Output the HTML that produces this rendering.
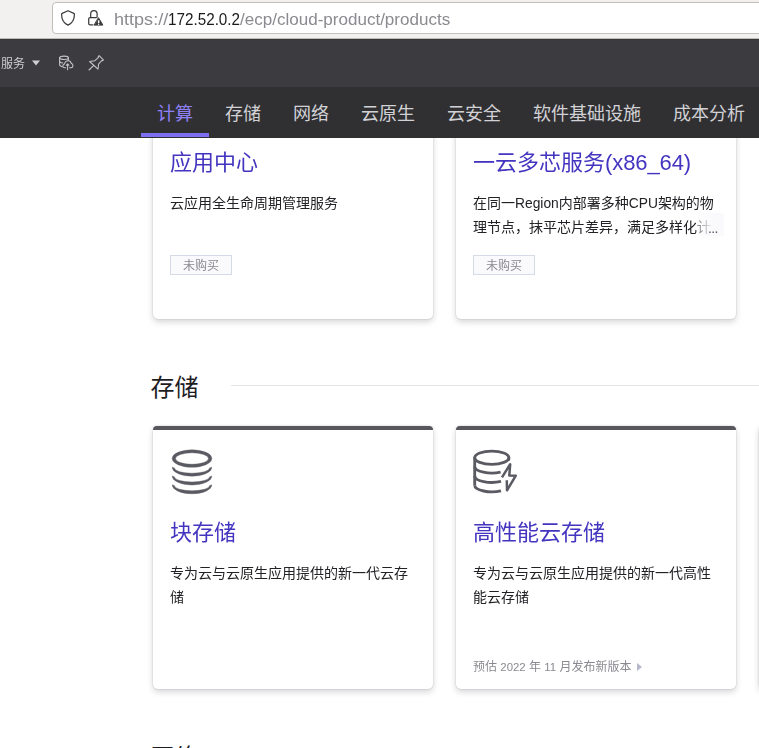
<!DOCTYPE html>
<html lang="zh-CN">
<head>
<meta charset="utf-8">
<title>云产品</title>
<style>
*{box-sizing:border-box;margin:0;padding:0}
html,body{width:759px;height:748px;overflow:hidden;background:#fff}
body{position:relative;font-family:"Liberation Sans","Noto Sans CJK SC",sans-serif;color:#1d1d1f;-webkit-font-smoothing:antialiased}
.abs{position:absolute}
/* browser chrome */
#chrome{z-index:5;left:0;top:0;width:759px;height:39px;background:#f2f1f0;border-bottom:1px solid #bfbcb8}
#urlbox{z-index:6;left:52px;top:2px;width:720px;height:32px;background:#fff;border:1px solid #c2beba;border-radius:4px}
#url{z-index:7;left:114px;top:7px;font-size:17.2px;line-height:24px;color:#8a8a90;white-space:nowrap;letter-spacing:0;width:400px;height:24px}
#url span{position:absolute;top:0;left:0;transform-origin:0 50%;display:block}
#url b{font-weight:400;color:#1b1b1f}
/* app header */
#hdr{z-index:5;left:0;top:39px;width:759px;height:49px;background:#3c3c40;border-top:1px solid #36363a}
#svc{will-change:transform;z-index:6;left:1px;top:54px;font-size:12px;line-height:20px;color:#cdcdd2;white-space:nowrap}
#nav{z-index:5;left:0;top:87px;width:759px;height:51px;background:#303033}
.tab{position:absolute;z-index:6;top:87px;height:51px;padding:0 16px;font-size:18px;line-height:54px;color:#d2d2d6;white-space:nowrap}
.tab.on{color:#8f80f5}
.tab.on:after{content:"";position:absolute;left:0;right:0;bottom:1px;height:4px;background:#7e6ef0}
/* cards */
.card{will-change:transform;position:absolute;width:280px;background:#fff;border-radius:5px;box-shadow:0 3px 6px rgba(30,30,45,.18),0 0 2px rgba(30,30,45,.2)}
.card.top4{border-top:4px solid #57575d;border-radius:4px 4px 5px 5px}
.ttl{position:absolute;left:17px;font-size:22px;line-height:30px;color:#4335c0;white-space:nowrap}
.desc{position:absolute;left:17px;width:244px;font-size:14px;line-height:24px;color:#222226}
.tag{position:absolute;left:17px;width:62px;height:20px;border:1px solid #d6d9e6;background:#fafafd;font-size:12px;line-height:20px;text-align:center;color:#8a8a8e}
.foot{position:absolute;left:17px;font-size:12px;line-height:18px;color:#8a8a90;white-space:nowrap}
.h2{position:absolute;left:150.5px;font-size:24px;line-height:32px;color:#1d1d1f;white-space:nowrap}
.rule{position:absolute;left:231px;width:540px;height:1px;background:#e5e5e7}
.ls{font-size:13.8px;line-height:0}
.lt{letter-spacing:-.1px}
.more{position:absolute;left:242px;top:157px;width:26px;height:23px;background:linear-gradient(90deg,rgba(251,251,253,.45) 0,#fafafd 60%);font-size:14px;line-height:30px;color:#55555c;text-align:left;padding-left:10px;letter-spacing:-.6px}
.fd{font-size:11.4px;line-height:0}
.tri{position:absolute;left:164.3px;top:4.5px;width:0;height:0;border-left:5px solid #b6b9cc;border-top:4.5px solid transparent;border-bottom:4.5px solid transparent}
</style>
</head>
<body>
<!-- browser chrome -->
<div id="chrome" class="abs"></div>
<div id="urlbox" class="abs"></div>
<svg class="abs" style="z-index:7;left:59px;top:9px" width="18" height="18" viewBox="0 0 18 18" fill="none" stroke="#3b3b3d" stroke-width="1.25" stroke-linejoin="round"><path d="M9 1.75 L14.8 4.35 Q15.4 4.6 15.4 5.3 C15.5 10.8 13.2 14.2 9 16.1 C4.8 14.2 2.5 10.8 2.6 5.3 Q2.6 4.6 3.2 4.35 Z"/></svg>
<svg class="abs" style="z-index:7;left:86px;top:9px" width="18" height="18" viewBox="0 0 18 18" fill="none" stroke="#3b3b3d" stroke-width="1.25" stroke-linejoin="round" stroke-linecap="round"><path d="M4.7 8.6 V4.8 A3.2 3.2 0 0 1 11.1 4.8 V8"/><path d="M6.8 15.9 H4.1 Q2.7 15.9 2.7 14.5 V10 Q2.7 8.6 4.1 8.6 H10.4"/><path d="M12.65 9 L16.9 16.1 H8.4 Z" fill="#3b3b3d" stroke-width="1"/><path d="M12.65 11.3 V14" stroke="#fff" stroke-width="1.5" stroke-linecap="butt"/><circle cx="12.65" cy="15.2" r=".75" fill="#fff" stroke="none"/></svg>
<div id="url" class="abs"><span style="transform:scaleX(1.05)">https://</span><span style="left:54.2px;transform:scaleX(.887);color:#1b1b1f">172.52.0.2</span><span style="left:126.3px;transform:scaleX(.991)">/ecp/cloud-product/products</span></div>

<!-- app header -->
<div id="hdr" class="abs"></div>
<div id="svc" class="abs">服务</div>
<svg class="abs" style="z-index:7;left:31px;top:59px" width="10" height="8" viewBox="0 0 10 8"><path d="M1 1.5 H9 L5 6.5 Z" fill="#cfcfd3"/></svg>
<svg class="abs" style="z-index:7;left:57px;top:54px" width="18" height="18" viewBox="0 0 18 18" fill="none" stroke="#c6c6ca" stroke-width="1.05" stroke-linecap="round" stroke-linejoin="round"><ellipse cx="7" cy="3.8" rx="4.4" ry="1.7"/><path d="M2.6 3.8 V10.6 C2.6 11.6 3.8 12.4 5.4 12.7"/><path d="M2.6 7.2 C2.7 8.1 4 8.8 5.8 9"/><path d="M11.4 3.8 V6.2"/><path d="M8.6 13.7 H7.8 C6.5 13.7 5.8 12.8 5.8 11.9 C5.8 10.9 6.5 10.2 7.5 10.1 C7.8 8.2 9.2 6.7 11 6.7 C12.8 6.7 14.1 7.9 14.3 9.6 C15.3 9.8 15.9 10.6 15.9 11.6 C15.9 12.8 15.1 13.7 14 13.7 H12.6"/><path d="M10.6 15.8 V10 M9.3 11.3 L10.6 9.9 L11.9 11.3"/></svg>
<svg class="abs" style="z-index:7;left:87px;top:54px" width="18" height="18" viewBox="0 0 18 18" fill="none" stroke="#c6c6ca" stroke-width="1.05" stroke-linecap="round" stroke-linejoin="round"><path d="M12.1 1.6 L16.4 5.9 L15.5 6.8 L14.7 6.5 L11.6 10.2 L11 15.2 L2.6 7.5 L7.6 6.8 L11.5 3.3 L11.2 2.5 Z"/><path d="M6.8 11.3 L2 16"/></svg>

<div id="nav" class="abs"></div>
<div class="tab on" style="left:141px">计算</div>
<div class="tab" style="left:209px">存储</div>
<div class="tab" style="left:277px">网络</div>
<div class="tab" style="left:345px">云原生</div>
<div class="tab" style="left:431px">云安全</div>
<div class="tab" style="left:517px">软件基础设施</div>
<div class="tab" style="left:657px">成本分析</div>

<!-- row 1 cards (scrolled, top hidden behind nav) -->
<div class="card" style="left:153px;top:56px;height:263px">
  <div class="ttl" style="top:92px">应用中心</div>
  <div class="desc" style="top:135px">云应用全生命周期管理服务</div>
  <div class="tag" style="top:199px">未购买</div>
</div>
<div class="card" style="left:456px;top:56px;height:263px">
  <div class="ttl" style="top:92px">一云多芯服务<span class="lt">(x86_64)</span></div>
  <div class="desc" style="top:135px;width:250px;height:48px;overflow:hidden">在同一<span class="ls">Region</span>内部署多种<span class="ls">CPU</span>架构的物理节点，抹平芯片差异，满足多样化计算需求</div>
  <div class="more">...</div>
  <div class="tag" style="top:199px">未购买</div>
</div>

<!-- section heading -->
<div class="h2" style="top:372px">存储</div>
<div class="rule" style="top:385px"></div>

<!-- row 2 cards -->
<div class="card top4" style="left:153px;top:426px;height:263px">
  <svg class="abs" style="left:17px;top:18px" width="46" height="50" viewBox="0 0 46 50" fill="#5a5a62" stroke="#5a5a62" stroke-width="0.4" stroke-linejoin="round"><path fill-rule="evenodd" d="M2.15 10.55 A19.85 8.75 0 1 0 41.85 10.55 A19.85 8.75 0 1 0 2.15 10.55 Z M5.6 10.55 A16.4 5.75 0 1 1 38.4 10.55 A16.4 5.75 0 1 1 5.6 10.55 Z"/><path d="M2.15 19.2 A19.85 9 0 0 0 41.85 19.2 L39.5 20.10 A17.5 5.1 0 0 1 4.5 20.10 Z"/><path d="M2.15 28.0 A19.85 9 0 0 0 41.85 28.0 L39.5 28.90 A17.5 5.1 0 0 1 4.5 28.90 Z"/><path d="M2.15 36.8 A19.85 9 0 0 0 41.85 36.8 L39.5 37.70 A17.5 5.1 0 0 1 4.5 37.70 Z"/></svg>
  <div class="ttl" style="top:88px">块存储</div>
  <div class="desc" style="top:131px">专为云与云原生应用提供的新一代云存储</div>
</div>
<div class="card top4" style="left:456px;top:426px;height:263px">
  <svg class="abs" style="left:14px;top:16px" width="50" height="50" viewBox="0 0 50 50" fill="none" stroke="#5a5a62" stroke-width="2.85" stroke-linecap="butt" stroke-linejoin="round"><ellipse cx="21.8" cy="11.7" rx="17.1" ry="6.6"/><path d="M4.7 11.55 V39.3"/><path d="M38.7 11.55 V14.6"/><path d="M4.7 20.5 A17.1 6.5 0 0 0 30.6 26.07"/><path d="M4.7 29.9 A17.1 6.5 0 0 0 31 35.37"/><path d="M4.7 39.3 A17.1 6.5 0 0 0 31 44.77"/><path d="M32 31.3 L40.2 18.2 L39.3 29.5 L45.8 29.7 L37 44.3 L36.8 34.3" stroke-width="2.5"/></svg>
  <div class="ttl" style="top:88px">高性能云存储</div>
  <div class="desc" style="top:131px">专为云与云原生应用提供的新一代高性能云存储</div>
  <div class="foot" style="top:228px">预估 <span class="fd">2022</span> 年 <span class="fd">11</span> 月发布新版本<i class="tri"></i></div>
</div>
<div class="card top4" style="left:759px;top:426px;height:263px"></div>

<!-- next section heading (cut by viewport) -->
<div class="h2" style="top:742px">网络</div>
<div class="rule" style="top:755px"></div>
</body>
</html>
